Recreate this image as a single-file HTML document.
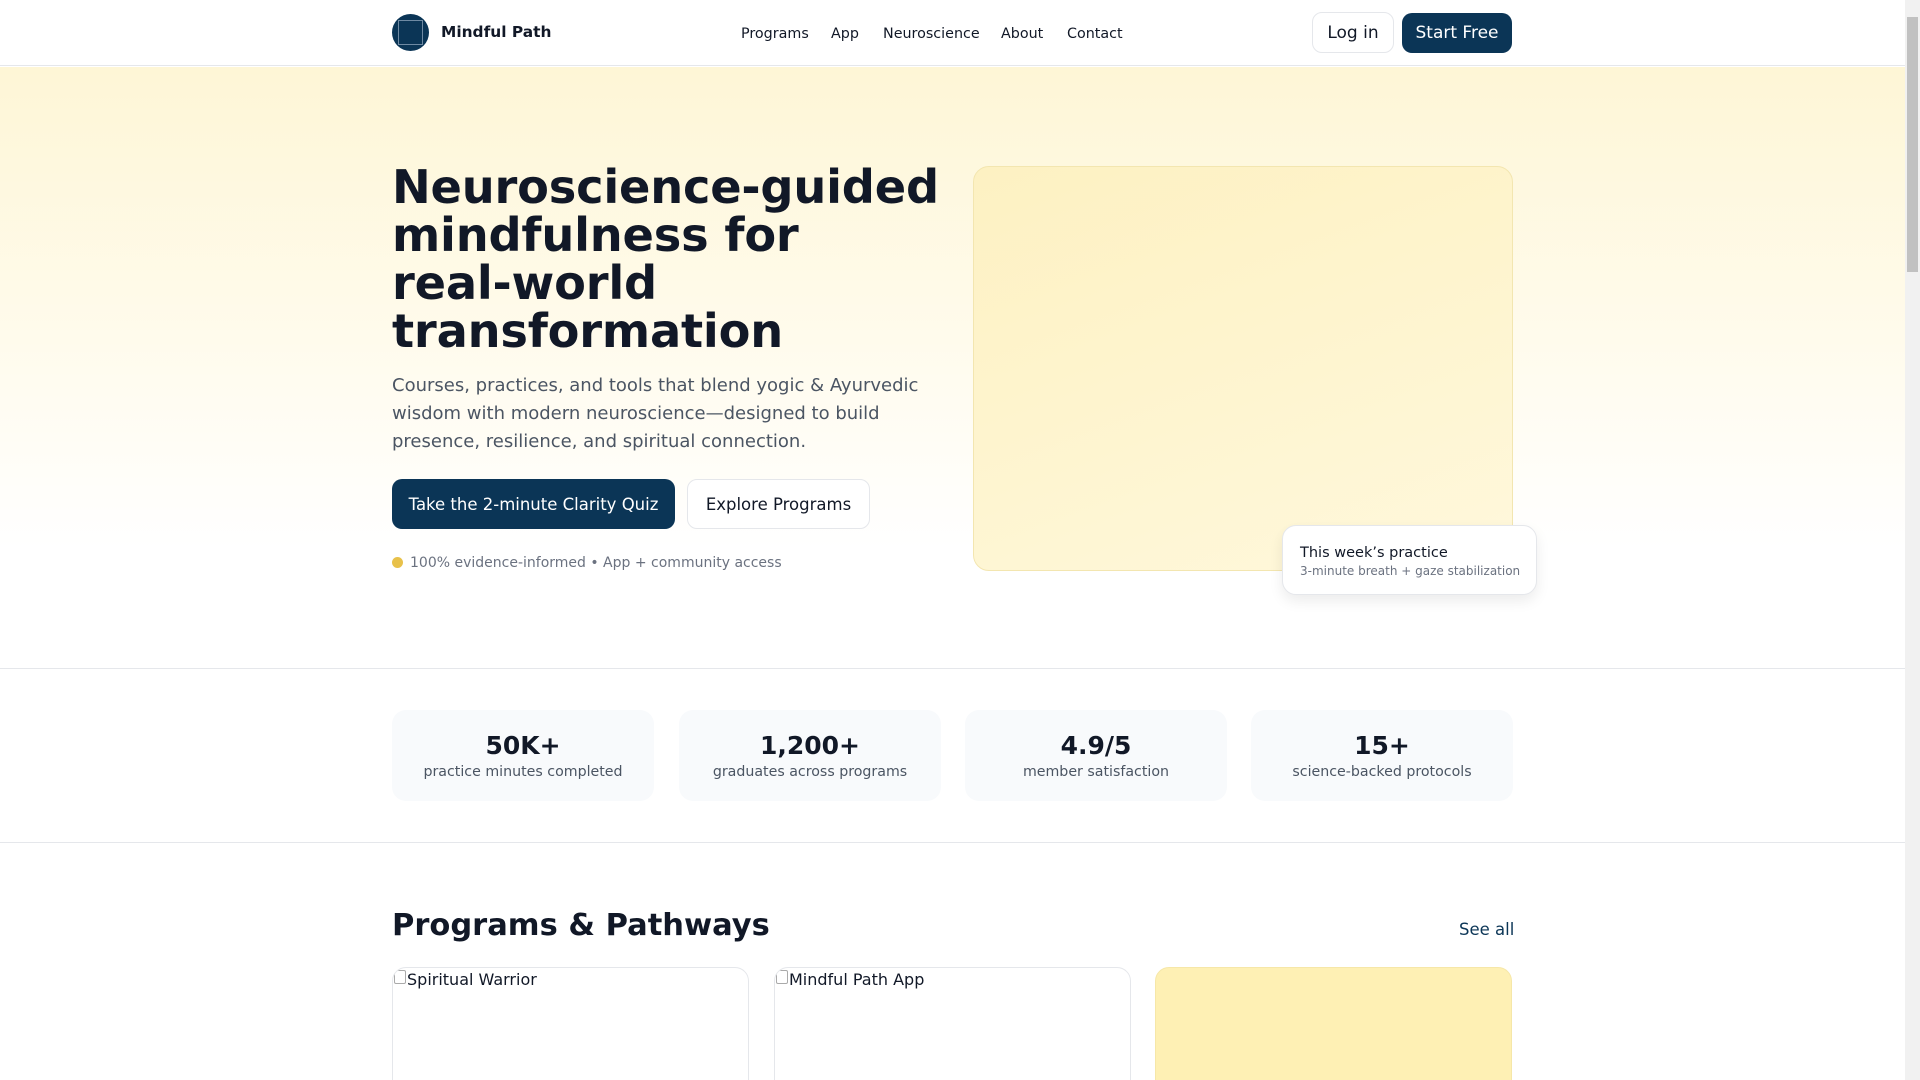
<!DOCTYPE html>
<html><head><meta charset="utf-8"><style>
*{box-sizing:border-box;margin:0;padding:0}
html,body{width:1920px;height:1080px;overflow:hidden;background:#fff;font-family:"DejaVu Sans","Liberation Sans",sans-serif;color:#111827}
.wrap{position:relative;width:1905px;height:1080px}
.abs{position:absolute}
.nav{left:0;top:0;width:1905px;height:66px;border-bottom:1px solid #e5e7eb;background:#fff}
.logo{left:392px;top:14px;width:37px;height:37px;border-radius:50%;background:#0b3556}
.logo i{position:absolute;left:6px;top:6px;width:25px;height:25px;border:1px solid #6f8aa3}
.brand{left:441px;top:23px;font-weight:bold;font-size:15.4px;color:#111827}
.nl{top:26px;font-size:14.3px;color:#111827}
.btn{border-radius:10px;font-size:17px;display:flex;align-items:center;justify-content:center}
.hero{left:0;top:67px;width:1905px;height:602px;background:linear-gradient(180deg,#fef6d6 0%,#fffbec 45%,#fff 80%);border-bottom:1px solid #e5e7eb}
h1{position:absolute;left:392px;top:163px;font-size:46.3px;line-height:48px;font-weight:bold;color:#111827;letter-spacing:-0.2px}
.p{left:392px;top:372px;width:560px;font-size:18px;line-height:28px;color:#4b5563}
.note{left:392px;top:555px;font-size:14px;color:#6b7280}
.stat{top:710px;width:262px;height:91px;background:#f8fafc;border-radius:14px;text-align:center}
.stat b{display:block;margin-top:21px;font-size:25px;color:#111827}
.stat span{display:block;margin-top:4px;font-size:14.2px;color:#4b5563}
.card{top:967px;width:357px;height:140px;border:1px solid #e5e7eb;border-radius:14px;font-size:16px;color:#111827;overflow:hidden;padding:2px 0 0 14px}
.card i{position:absolute;left:1px;top:2px;width:12px;height:14px;border:1px solid #aaa;border-radius:2px}
</style></head><body><div class="wrap">
<div class="abs nav"></div>
<div class="abs logo"><i></i></div>
<div class="abs brand">Mindful Path</div>
<div class="abs nl" style="left:741px">Programs</div>
<div class="abs nl" style="left:831px">App</div>
<div class="abs nl" style="left:883px">Neuroscience</div>
<div class="abs nl" style="left:1001px">About</div>
<div class="abs nl" style="left:1067px">Contact</div>
<div class="abs btn" style="left:1312px;top:12px;width:82px;height:41px;border:1px solid #e5e7eb;background:#fff">Log in</div>
<div class="abs btn" style="left:1402px;top:13px;width:110px;height:40px;background:#0b3556;color:#fff">Start Free</div>

<div class="abs hero"></div>
<h1>Neuroscience-guided<br>mindfulness for<br>real-world<br>transformation</h1>
<div class="abs p">Courses, practices, and tools that blend yogic &amp; Ayurvedic wisdom with modern neuroscience—designed to build presence, resilience, and spiritual connection.</div>
<div class="abs btn" style="left:392px;top:479px;width:283px;height:50px;background:#0b3556;color:#fff;font-size:16.5px">Take the 2-minute Clarity Quiz</div>
<div class="abs btn" style="left:687px;top:479px;width:183px;height:50px;background:#fff;border:1px solid #e5e7eb;font-size:16.5px">Explore Programs</div>
<div class="abs note"><span style="display:inline-block;width:11px;height:11px;border-radius:50%;background:#e8c14a;margin-right:7px;vertical-align:-1px"></span>100% evidence-informed • App + community access</div>
<div class="abs" style="left:973px;top:166px;width:540px;height:405px;border:1px solid #f3e6b0;border-radius:16px;background:linear-gradient(160deg,#fdf1c2,#fff8dc)"></div>
<div class="abs" style="left:1282px;top:525px;width:255px;height:70px;background:#fff;border:1px solid #e5e7eb;border-radius:14px;box-shadow:0 6px 14px rgba(0,0,0,.08)">
<div style="position:absolute;left:17px;top:19px;font-size:14.5px;color:#111827">This week’s practice</div>
<div style="position:absolute;left:17px;top:38px;font-size:12px;color:#6b7280">3-minute breath + gaze stabilization</div>
</div>

<div class="abs stat" style="left:392px"><b>50K+</b><span>practice minutes completed</span></div>
<div class="abs stat" style="left:679px"><b>1,200+</b><span>graduates across programs</span></div>
<div class="abs stat" style="left:965px"><b>4.9/5</b><span>member satisfaction</span></div>
<div class="abs stat" style="left:1251px"><b>15+</b><span>science-backed protocols</span></div>
<div class="abs" style="left:0;top:842px;width:1905px;height:1px;background:#e5e7eb"></div>

<div class="abs" style="left:392px;top:908px;font-size:30.5px;font-weight:bold;color:#111827">Programs &amp; Pathways</div>
<div class="abs" style="left:1459px;top:920px;font-size:16.5px;color:#0b3556">See all</div>
<div class="abs card" style="left:392px"><i></i>Spiritual Warrior</div>
<div class="abs card" style="left:774px"><i></i>Mindful Path App</div>
<div class="abs card" style="left:1155px;background:#fef0b4;border-color:#f6e7a8"></div>

<div class="abs" style="left:1905px;top:0;width:15px;height:1080px;background:#f1f1f1"></div>
<div class="abs" style="left:1907px;top:17px;width:11px;height:255px;background:#c1c1c1"></div>
</div></body></html>
